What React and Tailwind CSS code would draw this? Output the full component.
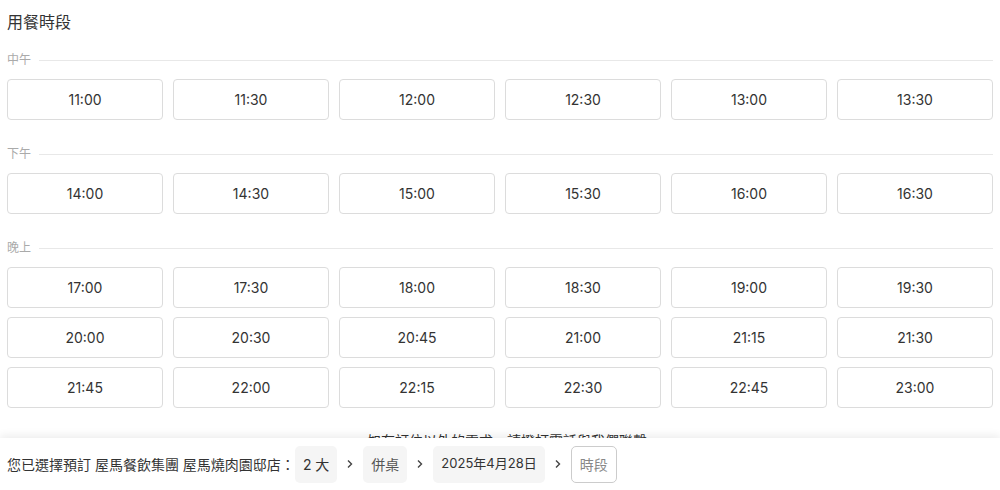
import React from "react";

const sections = [
  { label: "中午", times: ["11:00", "11:30", "12:00", "12:30", "13:00", "13:30"] },
  { label: "下午", times: ["14:00", "14:30", "15:00", "15:30", "16:00", "16:30"] },
  {
    label: "晚上",
    times: [
      "17:00", "17:30", "18:00", "18:30", "19:00", "19:30",
      "20:00", "20:30", "20:45", "21:00", "21:15", "21:30",
      "21:45", "22:00", "22:15", "22:30", "22:45", "23:00",
    ],
  },
];

function Chevron() {
  return (
    <svg width="8" height="10" viewBox="0 0 8 10" className="mx-[9px]">
      <path d="M2 1.5 L5.5 5 L2 8.5" fill="none" stroke="#444" strokeWidth="1.4" />
    </svg>
  );
}

export default function App() {
  return (
    <div
      className="relative h-[490px] w-[1000px] overflow-hidden bg-white text-[#333]"
      style={{ fontFamily: 'Inter, "Noto Sans CJK TC", sans-serif' }}
    >
      <div className="px-[7px] pt-[10px]">
        <h1 className="text-[16px] leading-[24px] text-[#333]">用餐時段</h1>
        {sections.map((s, i) => (
          <div key={s.label} className={i === 0 ? "mt-[18px]" : "mt-[26px]"}>
            <div className="flex items-center gap-[8px]">
              <span className="text-[12px] leading-[16px] text-[#aaa]">{s.label}</span>
              <div className="h-px flex-1 bg-[#e8e8e8]" />
            </div>
            <div className="mt-[11px] grid grid-cols-6 gap-x-[10px] gap-y-[9px]">
              {s.times.map((t) => (
                <div
                  key={t}
                  className="flex h-[41px] items-center justify-center rounded-[4px] border border-[#dcdcdc] bg-white text-[14px] text-[#333]"
                >
                  {t}
                </div>
              ))}
            </div>
          </div>
        ))}
        <div className="mt-[22px] pl-[14px] text-center text-[14px] text-[#333]">
          如有訂位以外的需求，請撥打電話與我們聯繫
        </div>
      </div>

      <div className="absolute bottom-0 left-0 right-0 flex h-[52px] items-center bg-white px-[7px] shadow-[0_-3px_8px_rgba(0,0,0,0.07)]">
        <span className="text-[14px] text-[#333]">您已選擇預訂 屋馬餐飲集團 屋馬燒肉園邸店：</span>
        <div className="flex h-[37px] items-center rounded-[5px] bg-[#f5f5f5] px-[8px] text-[14px]">2 大</div>
        <Chevron />
        <div className="flex h-[37px] items-center rounded-[5px] bg-[#f5f5f5] px-[8px] text-[14px] text-[#555]">併桌</div>
        <Chevron />
        <div className="flex h-[37px] items-center rounded-[5px] bg-[#f5f5f5] px-[8px] text-[13px]">2025年4月28日</div>
        <Chevron />
        <div className="flex h-[37px] items-center rounded-[5px] border border-[#ccc] bg-white px-[8px] text-[14px] text-[#888]">時段</div>
      </div>
    </div>
  );
}
